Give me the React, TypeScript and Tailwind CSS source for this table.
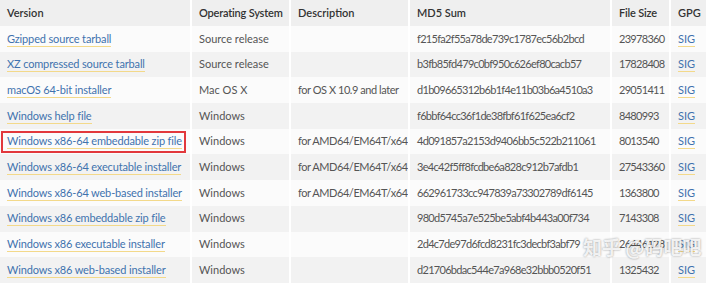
import React from 'react';

type Release = {
  version: string;
  os: string;
  description: string;
  md5: string;
  size: string;
  highlight?: boolean;
};

const releases: Release[] = [
  { version: 'Gzipped source tarball', os: 'Source release', description: '', md5: 'f215fa2f55a78de739c1787ec56b2bcd', size: '23978360' },
  { version: 'XZ compressed source tarball', os: 'Source release', description: '', md5: 'b3fb85fd479c0bf950c626ef80cacb57', size: '17828408' },
  { version: 'macOS 64-bit installer', os: 'Mac OS X', description: 'for OS X 10.9 and later', md5: 'd1b09665312b6b1f4e11b03b6a4510a3', size: '29051411' },
  { version: 'Windows help file', os: 'Windows', description: '', md5: 'f6bbf64cc36f1de38fbf61f625ea6cf2', size: '8480993' },
  { version: 'Windows x86-64 embeddable zip file', os: 'Windows', description: 'for AMD64/EM64T/x64', md5: '4d091857a2153d9406bb5c522b211061', size: '8013540', highlight: true },
  { version: 'Windows x86-64 executable installer', os: 'Windows', description: 'for AMD64/EM64T/x64', md5: '3e4c42f5ff8fcdbe6a828c912b7afdb1', size: '27543360' },
  { version: 'Windows x86-64 web-based installer', os: 'Windows', description: 'for AMD64/EM64T/x64', md5: '662961733cc947839a73302789df6145', size: '1363800' },
  { version: 'Windows x86 embeddable zip file', os: 'Windows', description: '', md5: '980d5745a7e525be5abf4b443a00f734', size: '7143308' },
  { version: 'Windows x86 executable installer', os: 'Windows', description: '', md5: '2d4c7de97d6fcd8231fc3decbf3abf79', size: '26446128' },
  { version: 'Windows x86 web-based installer', os: 'Windows', description: '', md5: 'd21706bdac544e7a968e32bbb0520f51', size: '1325432' },
];

const cell = 'h-[25.7px] px-[7px] border-r-2 border-white whitespace-nowrap text-left align-middle overflow-hidden';

const Link: React.FC<{ children: React.ReactNode }> = ({ children }) => (
  <a href="#" className="text-[#3f72ae] border-b border-[#f3d98a] pb-[1px]">
    {children}
  </a>
);

const App: React.FC = () => {
  return (
    <div
      className="relative w-[706px] h-[283px] overflow-hidden bg-white text-[11px] text-[#555]"
      style={{ fontFamily: 'Lato, "Noto Sans", sans-serif' }}
    >
      <table className="border-collapse table-fixed w-[760px]">
        <colgroup>
          <col className="w-[191px]" />
          <col className="w-[99px]" />
          <col className="w-[119px]" />
          <col className="w-[202px]" />
          <col className="w-[59px]" />
          <col className="w-[90px]" />
        </colgroup>
        <thead>
          <tr className="bg-[#efefef] text-[#333]">
            <th className={`${cell} font-semibold h-[26px]`}>Version</th>
            <th className={`${cell} font-semibold tracking-[-0.2px]`}>Operating System</th>
            <th className={`${cell} font-semibold`}>Description</th>
            <th className={`${cell} font-semibold`}>MD5 Sum</th>
            <th className={`${cell} font-semibold tracking-[-0.2px]`}>File Size</th>
            <th className={`${cell} font-semibold`}>GPG</th>
          </tr>
        </thead>
        <tbody>
          {releases.map((r, i) => (
            <tr key={r.version} className={i % 2 === 0 ? 'bg-[#fbfbfb]' : 'bg-[#f2f2f2]'}>
              <td className={`${cell} relative tracking-[-0.15px]`}>
                {r.highlight && (
                  <span className="absolute left-[1px] right-[4px] top-[2px] bottom-[1px] border-2 border-[#e2383c] pointer-events-none" />
                )}
                <Link>{r.version}</Link>
              </td>
              <td className={cell}>{r.os}</td>
              <td className={`${cell} tracking-[-0.45px]`}>{r.description}</td>
              <td className={`${cell} tracking-[-0.7px]`}>{r.md5}</td>
              <td className={`${cell} tracking-[-0.7px]`}>{r.size}</td>
              <td className={cell}>
                <Link>SIG</Link>
              </td>
            </tr>
          ))}
        </tbody>
      </table>

      {/* zhihu watermark */}
      <div
        className="absolute left-[583px] top-[233px] text-[19px] leading-[28px] font-bold text-white/85 whitespace-nowrap [text-shadow:0_0_2px_rgba(0,0,0,0.45)]"
        style={{ fontFamily: '"Noto Sans CJK SC", sans-serif' }}
      >
        知乎 @码吧吧
      </div>
    </div>
  );
};

export default App;
